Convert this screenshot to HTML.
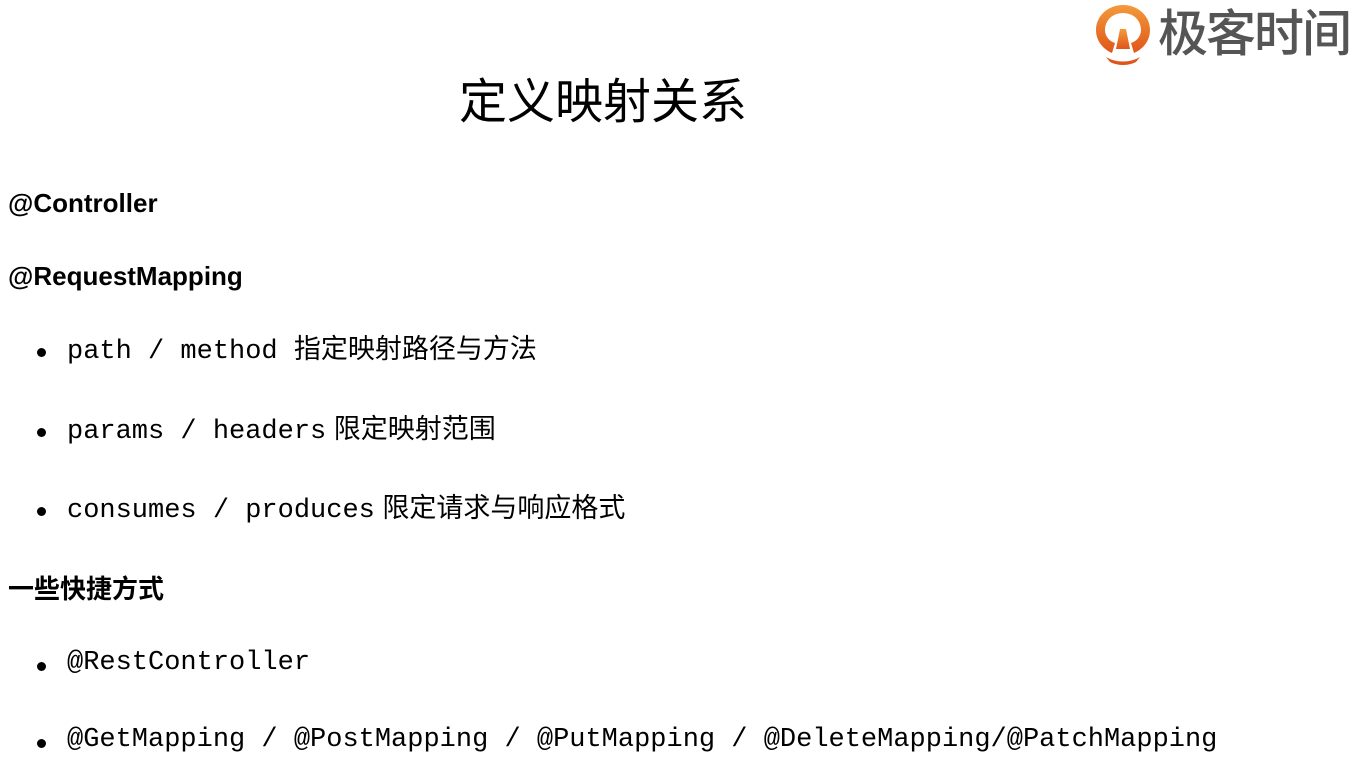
<!DOCTYPE html>
<html><head><meta charset="utf-8"><style>
body{margin:0;width:1356px;height:765px;background:#fff;position:relative;overflow:hidden;color:#000}
.a{position:absolute;white-space:nowrap;line-height:1}
.t{font-family:"Liberation Sans","Noto Sans CJK SC",sans-serif;font-size:48px;left:459px;top:79px}
.h{font-family:"Liberation Sans","Noto Sans CJK SC",sans-serif;font-weight:bold;font-size:26px;left:8px}
.b{font-family:"Liberation Mono","Noto Sans CJK SC",monospace;font-size:27px;left:67px}
.b .c{font-family:"Liberation Sans","Noto Sans CJK SC",sans-serif;font-size:27px}
.d{position:absolute;left:37px;width:9px;height:9px;border-radius:50%;background:#000}
.logo{font-family:"Liberation Sans","Noto Sans CJK SC",sans-serif;font-size:50px;color:#555;left:1158px;top:9px;font-weight:500;letter-spacing:-2px}
</style></head><body>
<svg class="a" style="left:1094px;top:3px" width="58" height="64" viewBox="0 0 58 64">
<defs><linearGradient id="g" x1="0" y1="0" x2="0" y2="1"><stop offset="0" stop-color="#f39a3a"/><stop offset="1" stop-color="#e0561a"/></linearGradient></defs>
<path d="M29 2C14 2 2 13 2 27c0 11 7 19 16 23l3-10c-6-2-10-7-10-13 0-10 8-17 18-17s18 7 18 17c0 6-4 11-10 13l3 10c9-4 16-12 16-23C56 13 44 2 29 2z" fill="url(#g)"/>
<path d="M22 46l4-20h6l4 20z" fill="url(#g)"/>
<path d="M12 54c10 6 24 6 34 0l-4 5c-8 4-18 4-26 0z" fill="#e0561a"/>
</svg>
<div class="a logo">极客时间</div>
<div class="a t">定义映射关系</div>
<div class="a h" style="top:190px">@Controller</div>
<div class="a h" style="top:263px">@RequestMapping</div>
<div class="d" style="top:348px"></div><div class="a b" style="top:336px">path / method <span class="c">指定映射路径与方法</span></div>
<div class="d" style="top:428px"></div><div class="a b" style="top:416px">params / headers<span class="c"> 限定映射范围</span></div>
<div class="d" style="top:507px"></div><div class="a b" style="top:495px">consumes / produces<span class="c"> 限定请求与响应格式</span></div>
<div class="a h" style="top:576px">一些快捷方式</div>
<div class="d" style="top:662px"></div><div class="a b" style="top:650px">@RestController</div>
<div class="d" style="top:739px"></div><div class="a b" style="top:727px">@GetMapping / @PostMapping / @PutMapping / @DeleteMapping/@PatchMapping</div>
</body></html>
